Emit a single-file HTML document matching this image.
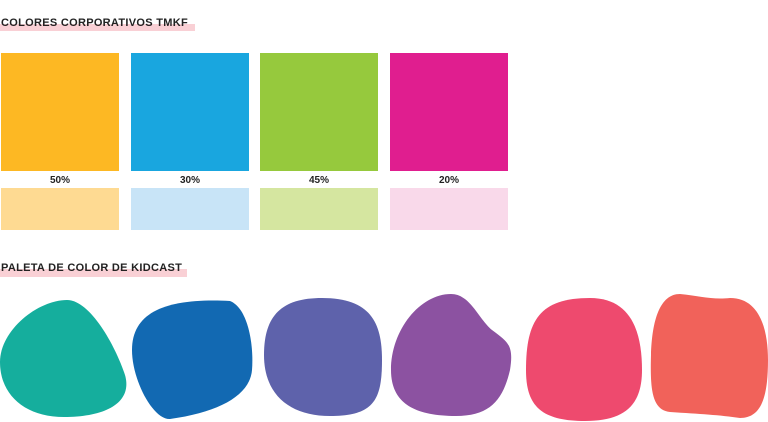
<!DOCTYPE html>
<html><head><meta charset="utf-8"><style>
html,body{margin:0;padding:0;background:#fff;width:768px;height:422px;overflow:hidden;position:relative;font-family:"Liberation Sans",sans-serif}
.hl{position:absolute;left:0;background:#f9d0d5}
.t{position:absolute;left:1px;font-size:11px;font-weight:bold;color:#222;letter-spacing:0.3px;white-space:nowrap;line-height:13px}
.b{position:absolute}
.l{position:absolute;width:118px;text-align:center;font-size:10px;font-weight:bold;color:#222;top:175px}
</style></head><body>
<div class="hl" style="top:24px;height:7px;width:195px"></div>
<div class="t" style="top:17px">COLORES CORPORATIVOS TMKF</div>
<div class="hl" style="top:269px;height:8px;width:187px"></div>
<div class="t" style="top:262px">PALETA DE COLOR DE KIDCAST</div>

<div class="b" style="left:1px;top:53px;width:118px;height:118px;background:#FDB823"></div>
<div class="b" style="left:131px;top:53px;width:118px;height:118px;background:#19A6DF"></div>
<div class="b" style="left:260px;top:53px;width:118px;height:118px;background:#96C93D"></div>
<div class="b" style="left:390px;top:53px;width:118px;height:118px;background:#E01E8F"></div>
<div class="l" style="left:1px">50%</div>
<div class="l" style="left:131px">30%</div>
<div class="l" style="left:260px">45%</div>
<div class="l" style="left:390px">20%</div>
<div class="b" style="left:1px;top:188px;width:118px;height:42px;background:#FEDA92"></div>
<div class="b" style="left:131px;top:188px;width:118px;height:42px;background:#C8E4F7"></div>
<div class="b" style="left:260px;top:188px;width:118px;height:42px;background:#D5E6A0"></div>
<div class="b" style="left:390px;top:188px;width:118px;height:42px;background:#F9D9EA"></div>

<svg width="768" height="422" style="position:absolute;left:0;top:0">
<path fill="#15AE9D" d="M67,300 C90,300 115,345 125,375 C133,403 105,417 64,417 C25,417 0,395 0,362 C0,330 38,300 67,300Z"/>
<path fill="#1269B2" d="M230,301 C248,308 254,345 252,370 C250,395 220,412 170,419 C153,420 132,380 132,350 C132,310 170,298 230,301Z"/>
<path fill="#5E62AB" d="M322,298 C370,298 382,322 382,360 C382,400 374,416 330,416 C290,416 264,395 264,355 C264,315 282,298 322,298Z"/>
<path fill="#8C52A1" d="M451,294 C470,294 478,318 492,330 C508,342 514,345 510,370 C503,400 490,416 456,416 C410,416 391,400 391,370 C391,330 420,294 451,294Z"/>
<path fill="#EE4A6E" d="M590,298 C630,298 642,330 642,370 C642,405 625,421 585,421 C540,421 526,405 526,370 C526,320 540,298 590,298Z"/>
<path fill="#F1625A" d="M680,294 C700,296 712,300 730,298 C760,298 768,330 768,360 C768,400 760,418 740,418 C720,415 700,414 670,412 C652,410 650,390 651,355 C652,320 660,294 680,294Z"/>
</svg>
</body></html>
